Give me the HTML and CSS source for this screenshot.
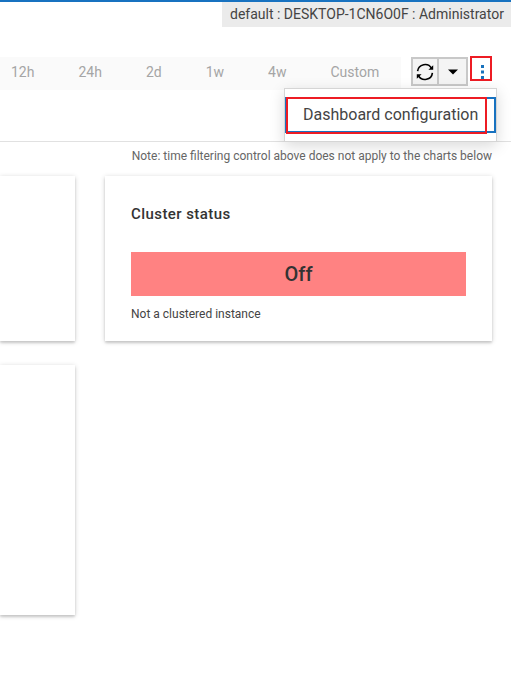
FILE: index.html
```html
<!DOCTYPE html>
<html lang="en">
<head>
<meta charset="utf-8">
<title>Dashboard</title>
<link rel="stylesheet" href="styles.css">
</head>
<body>
<header class="topbar"><div class="user"><span>default : DESKTOP-1CN6O0F : Administrator</span></div></header>
<section class="toolbar">
  <nav class="ranges"><span>12h</span><span>24h</span><span>2d</span><span>1w</span><span>4w</span><span>Custom</span></nav>
  <div class="refresh">
    <button class="reload" aria-label="Refresh">
      <svg width="18" height="18" viewBox="0 0 18 18" fill="none" stroke="#000" stroke-width="1.6"><path d="M1.6 8.2A7.5 7.5 0 0 1 15.6 5.4M16.4 9.8A7.5 7.5 0 0 1 2.4 12.6"/><path d="M17.2 2.2V6.7H12.4ZM.8 15.8V11.3H5.6Z" fill="#000" stroke="none"/></svg>
    </button>
    <button class="drop" aria-label="Refresh options"><svg width="10" height="6" viewBox="0 0 10 6"><path d="M0 .5H10L5 5.5Z"/></svg></button>
  </div>
  <div class="more">
    <svg width="3" height="14" viewBox="0 0 3 14" fill="#1872bd"><path d="M0 0H3V3H0ZM0 5.5H3V8.5H0ZM0 11H3V14H0Z"/></svg>
    <div class="menu"><div class="item"><span class="label">Dashboard configuration</span><i class="mark"></i></div></div>
  </div>
</section>
<p class="note"><span>Note: time filtering control above does not apply to the charts below</span></p>
<main class="grid">
  <div class="card"></div>
  <div class="card status">
    <h2><span>Cluster status</span></h2>
    <div class="state"><span>Off</span></div>
    <p><span>Not a clustered instance</span></p>
  </div>
  <div class="card"></div>
</main>
</body>
</html>
```
FILE: styles.css
```css
* { box-sizing: border-box; }
body { margin: 0; height: 684px; overflow: hidden; background: #fff; color: #444; font-family: Roboto, "Liberation Sans", sans-serif; white-space: nowrap; }
h2, p { margin: 0; }
.topbar { height: 27px; border-top: 2px solid #1872c0; display: flex; justify-content: flex-end; }
.user { width: 289px; height: 25px; padding-left: 8px; background: #ebebeb; font-size: 14px; line-height: 25px; }
.toolbar { height: 115px; padding-top: 30px; border-bottom: 1px solid #e1e1e1; display: flex; align-items: flex-start; }
.ranges { width: 401px; height: 33px; padding-left: 11px; background: #fafafa; color: #a5a5a5; display: flex; gap: 44px; font-size: 14px; line-height: 31px; }
.refresh { margin-left: 10px; width: 57px; height: 29px; border: 2px solid #c8c8c8; display: flex; }
button { padding: 0; border: 0; background: #f4f4f4; display: flex; align-items: center; justify-content: center; }
.reload { width: 24px; }
.drop { flex: 1; border-left: 2px solid #c8c8c8; }
.more { position: relative; margin: -1px 0 0 2px; width: 22px; height: 25px; border: 2px solid #ed1c24; display: flex; justify-content: center; padding: 7px 0 0 3px; }
.menu { position: absolute; z-index: 2; top: 30px; right: -7px; width: 213px; height: 54px; padding: 8px 0; border: 1px solid #d5d5d5; background: #fff; box-shadow: 0 4px 14px rgba(0,0,0,.15); }
.item { position: relative; height: 36px; border: 2px solid #1872c0; padding-left: 16px; font-size: 16px; line-height: 32px; }
.mark { position: absolute; left: -1px; top: -2px; width: 201px; height: 37px; border: 2px solid #ed1c24; }
.note { height: 34px; padding-right: 19px; text-align: right; font-size: 12px; line-height: 28px; color: #666; }
.grid { display: grid; grid-template-columns: 75px 387px; grid-template-rows: 165px 250px; gap: 24px 30px; }
.card { background: #fff; box-shadow: 0 1px 5px rgba(0,0,0,.18), 0 2px 2px rgba(0,0,0,.12); }
.status { padding: 26px; }
h2 { height: 50px; font-size: 15px; font-weight: 500; line-height: 24px; letter-spacing: .43px; color: #333; }
.state { height: 44px; background: #ff8282; color: #333; text-align: center; font-size: 20px; font-weight: 500; line-height: 44px; }
.status p { font-size: 12px; line-height: 36px; }
```
